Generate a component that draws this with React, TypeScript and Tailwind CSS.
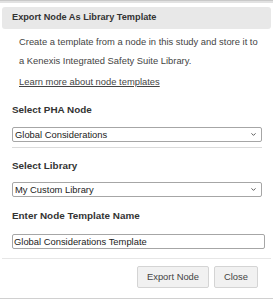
import { ChevronDown } from 'lucide-react'

function SelectBox({ value }: { value: string }) {
  return (
    <div className="relative ml-[12px] w-[250px] h-[15px]">
      <select
        defaultValue={value}
        className="appearance-none block w-full h-full border border-[#a6a6a6] rounded-[2px] bg-white pl-[2px] pr-[16px] text-[9.4px] leading-[13px] text-[#222] outline-none"
      >
        <option>{value}</option>
      </select>
      <ChevronDown
        className="absolute right-[5px] top-[4px] w-[7px] h-[7px] text-[#444] pointer-events-none"
        strokeWidth={3}
      />
    </div>
  )
}

export default function App() {
  return (
    <div className="w-[273px] h-[300px] bg-white flex flex-col font-['Liberation_Sans',Arial,sans-serif] text-[#333]">
      <div className="h-[3px] border-t border-[#c9c9c9] bg-[#e2e2e2]" />

      <div className="mx-[2px] mt-[4px] h-[22px] rounded-[3px] bg-[#e8e8e8] flex items-center pl-[10px] text-[9.2px] font-bold text-[#333]">
        Export Node As Library Template
      </div>

      <p className="mt-[3px] pl-[19px] pr-[10px] text-[9.4px] leading-[19px] text-[#444]">
        Create a template from a node in this study and store it to a Kenexis Integrated Safety Suite Library.
      </p>
      <a className="mt-[2px] ml-[19px] text-[9.4px] leading-[19px] underline text-[#444] w-fit">
        Learn more about node templates
      </a>

      <div className="mt-[9px] pl-[12px] text-[9.9px] leading-[19px] font-bold text-[#333]">Select PHA Node</div>
      <div className="mt-[8px]">
        <SelectBox value="Global Considerations" />
      </div>
      <div className="mt-[5px] ml-[12px] w-[250px] h-px bg-[#dadada]" />

      <div className="mt-[8px] pl-[12px] text-[9.9px] leading-[19px] font-bold text-[#333]">Select Library</div>
      <div className="mt-[7px]">
        <SelectBox value="My Custom Library" />
      </div>

      <div className="mt-[9px] pl-[12px] text-[9.9px] leading-[19px] font-bold text-[#333]">Enter Node Template Name</div>
      <input
        defaultValue="Global Considerations Template"
        className="mt-[9px] ml-[12px] w-[253px] h-[15px] border border-[#a6a6a6] rounded-[2px] px-[1px] text-[9.4px] text-[#222] outline-none"
      />

      <div className="mt-[9px] mx-[2px] h-px bg-[#e6e6e6]" />

      <div className="mt-[7px] flex justify-end gap-[5px] pr-[15px]">
        <button className="w-[72px] h-[22px] rounded-[2px] border border-[#d4d4d4] bg-[#f1f1f1] text-[9.4px] text-[#444]">
          Export Node
        </button>
        <button className="w-[44px] h-[22px] rounded-[2px] border border-[#d4d4d4] bg-[#f1f1f1] text-[9.4px] text-[#444]">
          Close
        </button>
      </div>

      <div className="mt-auto mb-[1px] h-px bg-[#d0d0d0]" />
    </div>
  )
}
